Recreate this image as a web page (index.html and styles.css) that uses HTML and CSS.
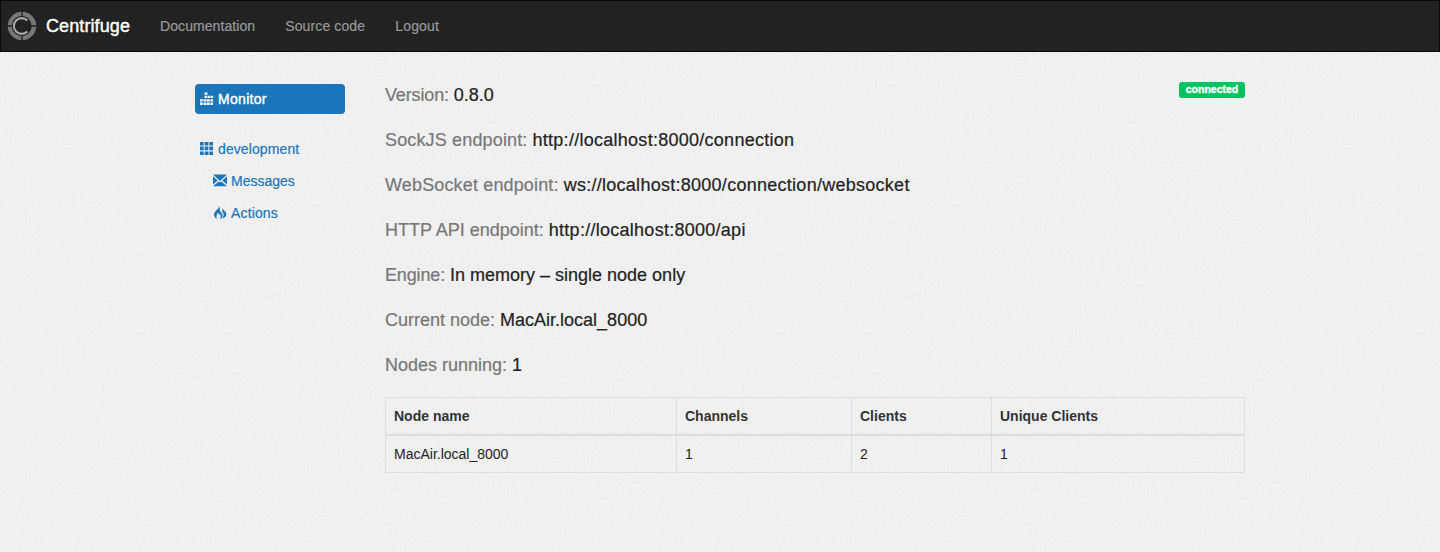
FILE: index.html
```html
<!DOCTYPE html>
<html lang="en">
<head>
<meta charset="utf-8">
<title>Centrifuge</title>
<link rel="stylesheet" href="styles.css">
</head>
<body>
<svg class="grain" aria-hidden="true"><filter id="paper" x="0" y="0" width="100%" height="100%" color-interpolation-filters="sRGB"><feTurbulence type="fractalNoise" baseFrequency="0.4" numOctaves="3" seed="4"/><feColorMatrix values="0.04 0 0 0 0.92  0.04 0 0 0 0.92  0.04 0 0 0 0.92  0 0 0 0 1"/></filter><rect width="100%" height="100%" filter="url(#paper)"/></svg>
<header class="navbar">
  <a class="brand"><svg class="logo" viewBox="0 0 30 30" fill="none"><circle cx="15" cy="15" r="12" stroke="#777" stroke-width="4.6"/><path d="M15 0v7M15 23v7M0 15h7M23 15h7" stroke="#222" stroke-width="1.3"/><path d="M20.2 9.2A8 8 0 1 0 20.2 20.8" stroke="#222" stroke-width="4"/><path d="M20.3 9.4A7.9 7.9 0 1 0 20.3 20.6" stroke="#aaa" stroke-width="2.1"/></svg><span class="brand-name">Centrifuge</span></a>
  <nav class="links"><a class="doc">Documentation</a><a class="source">Source code</a><a class="logout">Logout</a></nav>
</header>
<div class="container">
  <aside class="sidebar">
    <a class="item active"><svg class="icon" viewBox="0 0 14 14" fill="currentColor"><path d="M0 10.600h2.700v2.400H0zM3.500 10.600h3v2.400h-3zM7 10.600h2.800v2.400H7zM10.400 10.600h2.700v2.400h-2.700zM0 7.200h2.700v2.400H0zM3.500 7.200h3v2.400h-3zM7 7.200h2.800v2.400H7zM10.400 7.200h2.700v2.400h-2.700zM4.500 3.800h2.700v2.300h-2.700zM10.400 3.800h2.700v2.300h-2.700zM7.800 3.800h2v2.300h-2zM4.500.4h3v2.300h-3z"/></svg><span class="t-monitor">Monitor</span></a>
    <a class="item project"><svg class="icon" viewBox="0 0 14 14" fill="currentColor"><path d="M0 0h3.700v3.400H0zM4.700 0h3.700v3.400H4.700zM9.400 0H13v3.400H9.400zM0 4.600h3.700v3.600H0zM4.700 4.600h3.700v3.600H4.700zM9.400 4.600H13v3.600H9.400zM0 9.400h3.700V13H0zM4.700 9.400h3.700V13H4.700zM9.400 9.400H13V13H9.400z"/></svg><span class="t-dev">development</span></a>
    <a class="item sub"><svg class="icon" viewBox="0 0 14 14" fill="currentColor"><path d="M0 .6h14L7 7zM0 2.200l4.700 4.400L0 10.600zM14 2.200v8.400L9.300 6.600zM0 12.200l5.700-4.800L7 8.600l1.300-1.200 5.700 4.800z"/></svg><span class="t-msg">Messages</span></a>
    <a class="item sub"><svg class="icon" viewBox="0 0 14 14" fill="currentColor"><path d="M6 0C6.300 2 4.500 3.200 3 4.700 1.200 6.400.8 8.100 1.200 9.800c.4 1.800 1.800 2.800 3.300 3.200C3.200 11.500 3 10.200 3.800 9 4.600 7.900 4.700 7.200 4.500 6.200c1.300.8 1.700 2 1.300 3.300.8-.5 1.100-1.200 1.200-2.100C8.200 9.200 7.900 11.400 6.800 13.300c2-.7 3.100-2.500 2.700-4.600-.3-1.700-1.900-2.300-2.500-3.900C6.400 3.200 7.300 1.500 6 0zM9.300 2.500c.5 1.500-.7 2.400.3 3.700 1.100 1.400 1.400 2.400.9 3.900-.3.900-.7 1.700-1.300 2.400 2.500-.4 4.200-2.200 4.100-4.600C13.200 5.500 10.900 4.800 9.300 2.500z"/></svg><span class="t-act">Actions</span></a>
  </aside>
  <main class="content">
    <span class="status">connected</span>
    <p><span class="key tight">Version:</span> 0.8.0</p>
    <p><span class="key wide">SockJS endpoint:</span> <span class="url">http://localhost:8000/connection</span></p>
    <p><span class="key wide">WebSocket endpoint:</span> <span class="url">ws://localhost:8000/connection/websocket</span></p>
    <p><span class="key">HTTP API endpoint:</span> <span class="url">http://localhost:8000/api</span></p>
    <p><span class="key tight">Engine:</span> In memory – single node only</p>
    <p><span class="key">Current node:</span> MacAir.local_8000</p>
    <p><span class="key">Nodes running:</span> 1</p>
    <table>
      <colgroup><col class="c1"><col class="c2"><col class="c3"><col class="c4"></colgroup>
      <thead><tr><th>Node name</th><th>Channels</th><th>Clients</th><th>Unique Clients</th></tr></thead>
      <tbody><tr><td>MacAir.local_8000</td><td>1</td><td>2</td><td>1</td></tr></tbody>
    </table>
  </main>
</div>
</body>
</html>
```
FILE: styles.css
```css
* { box-sizing: border-box; }
body { margin: 0; min-height: 552px; background: #f0f0f0; color: #222; font: 14px/20px "Liberation Sans", Arial, sans-serif; overflow: hidden; }
.grain { position: absolute; inset: 0; width: 100%; height: 100%; z-index: -1; }
.navbar { display: flex; align-items: center; height: 52px; padding-left: 6px; background: #222; border: 1px solid #080808; }
.brand { display: flex; align-items: center; gap: 9px; width: 138px; color: #fff; font-size: 18px; }
.brand-name { letter-spacing: .1px; -webkit-text-stroke: .4px #fff; }
.logo { width: 30px; height: 30px; }
.links { display: flex; gap: 30px; padding-left: 15px; color: #999; -webkit-text-stroke: .2px #999; }
.doc { letter-spacing: .08px; }
.source { letter-spacing: .12px; }
.logout { letter-spacing: .2px; }
.container { display: flex; gap: 40px; width: 1050px; margin: 32px auto 0; }
.sidebar { width: 150px; flex: none; color: #1b75bb; }
.item { display: flex; align-items: center; gap: 4px; height: 32px; padding-left: 5px; -webkit-text-stroke: .2px #1b75bb; }
.item.active { height: 30px; color: #fff; background: #1b75bb; border-radius: 4px; -webkit-text-stroke: .4px #fff; }
.t-monitor { letter-spacing: .3px; }
.t-dev { letter-spacing: .1px; }
.t-act { letter-spacing: .15px; }
.project { margin-top: 19px; }
.item.sub { padding-left: 18px; }
.icon { width: 14px; height: 14px; }
.icon path { stroke: none; }
.content { position: relative; width: 860px; padding-top: 1px; }
.content p { margin: 0 0 25px; font-size: 18px; line-height: 20px; white-space: nowrap; -webkit-text-stroke: .2px; }
.key { color: #777; }
.tight { letter-spacing: -.15px; }
.wide { letter-spacing: .15px; }
.url { letter-spacing: .27px; }
.status { position: absolute; top: -2px; right: 0; width: 66px; height: 16px; border-radius: 3px; background: #00c35f; color: #fff; font-size: 10.5px; line-height: 15px; font-weight: bold; text-align: center; -webkit-text-stroke: .4px #fff; }
table { width: 860px; table-layout: fixed; border-collapse: collapse; margin-top: -3px; }
th, td { height: 38px; padding: 0 8px; border: 1px solid #ddd; text-align: left; }
th { height: 37px; border-bottom-width: 2px; color: #333; }
.c1 { width: 291px; }
.c2 { width: 175px; }
.c3 { width: 140px; }
```
